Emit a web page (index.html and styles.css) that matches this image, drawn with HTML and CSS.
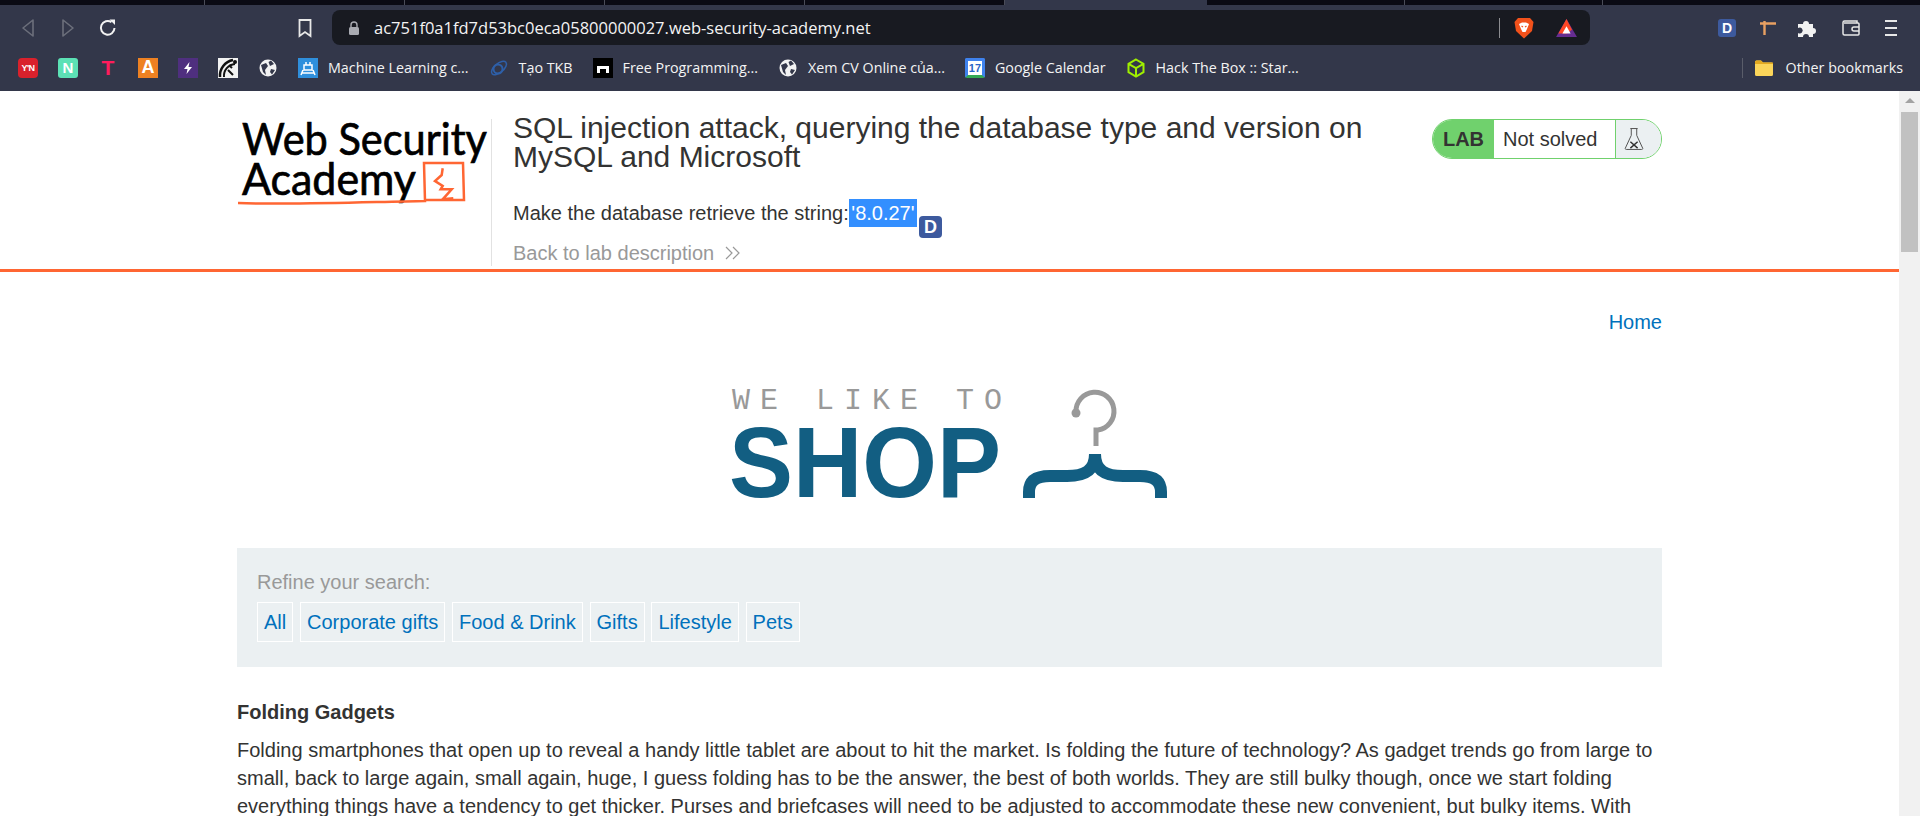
FILE: index.html
```html
<!DOCTYPE html>
<html>
<head>
  <meta charset="UTF-8">
  <title>SQL injection attack, querying the database type and version on MySQL and Microsoft</title>
  <link rel="stylesheet" href="styles.css">
</head>
<body>

  <div class="tabstrip">
    <div class="tab first"></div>
    <div class="tab"></div>
    <div class="tab"></div>
    <div class="tab"></div>
    <div class="tab"></div>
    <div class="tab active"></div>
    <div class="tab short"></div>
    <div class="tab short"></div>
    <div class="tab last"></div>
  </div>

  <div class="toolbar">
    <svg class="ico" viewBox="0 0 20 20"><path d="M15 2 L5 10 L15 18Z" fill="none" stroke="#6c6f7b" stroke-width="1.6" stroke-linejoin="round"/></svg>
    <svg class="ico" viewBox="0 0 20 20"><path d="M5 2 L15 10 L5 18Z" fill="none" stroke="#6c6f7b" stroke-width="1.6" stroke-linejoin="round"/></svg>
    <svg class="ico" viewBox="0 0 20 20"><path d="M16.5 10 A6.8 6.8 0 1 1 13.5 4.2" fill="none" stroke="#f2f2f2" stroke-width="2"/><path d="M11.5 1.5 H17 V7 Z" fill="#f2f2f2"/></svg>
    <svg class="ico bookmark-btn" viewBox="0 0 20 20"><path d="M4.500 2 H15.500 V18 L10 14 L4.500 18Z" fill="none" stroke="#e8e8e8" stroke-width="1.800"/></svg>
    <div class="omnibox">
      <svg class="lock" viewBox="0 0 12 14"><path d="M3 6 V4 A3 3 0 0 1 9 4 V6" fill="none" stroke="#a9abb2" stroke-width="1.400"/><rect x="1" y="6" width="10" height="8" rx="1.500" fill="#a9abb2"/></svg>
      <span class="url">ac751f0a1fd7d53bc0eca05800000027.web-security-academy.net</span>
      <div class="omni-right">
        <div class="omni-sep"></div>
        <svg class="brave" viewBox="0 0 20 22"><path d="M4 1 H16 L19.500 5 L18 14 L10 21.500 L2 14 L0.500 5Z" fill="#f1511b"/><path d="M5 7 L8 5.500 H12 L15 7 L13 12 L11.500 15 H8.500 L7 12Z" fill="#fff"/><path d="M7.500 9 L9 10 M12.500 9 L11 10" stroke="#f1511b" stroke-width="1.200"/></svg>
        <svg class="bat" viewBox="0 0 24 22"><path d="M12 1 L23.500 21 H0.500Z" fill="#662d91"/><path d="M12 1 L18 13 L12 17 H3Z" fill="#ff4724"/><path d="M12 9 L16.500 17 H7.500Z" fill="#fff"/></svg>
      </div>
    </div>
    <div class="ext-d">D</div>
    <svg class="ico" viewBox="0 0 20 20"><path d="M3 5.500 H19 M7.500 3 V17" fill="none" stroke="#e8a062" stroke-width="2.400"/></svg>
    <svg class="ico" viewBox="0 0 20 20"><path d="M1 6 H6 A3 3 0 1 1 12 6 H16 V10 A3 3 0 1 1 16 16 V19 H12 A3 3 0 1 0 6 19 H1 V15 A3 3 0 1 0 1 10Z" fill="#f2f2f2"/></svg>
    <svg class="ico wallet" viewBox="0 0 20 20"><path d="M16 5 V3 H3.500 A1.500 1.500 0 0 0 2 4.500 V15.500 A1.500 1.500 0 0 0 3.500 17 H17 A1 1 0 0 0 18 16 V6 A1 1 0 0 0 17 5 H3 M18 9 H13 A2 2 0 0 0 13 13 H18" fill="none" stroke="#e8e8e8" stroke-width="1.500"/></svg>
    <svg class="ico" viewBox="0 0 20 20"><path d="M4 3 H16 M4 10 H16 M4 17 H16" stroke="#e8e8e8" stroke-width="1.800"/></svg>
  </div>

  <div class="bookmarks">
    <div class="bm-icon fav-yan">Y'N</div>
    <div class="bm-icon fav-n">N</div>
    <div class="bm-icon fav-t">T</div>
    <div class="bm-icon fav-a">A</div>
    <div class="bm-icon fav-bolt"><svg viewBox="0 0 20 20"><path d="M11.500 4 L6 11 H9.500 L8.500 16 L14 9 H10.500Z" fill="#fff"/></svg></div>
    <div class="bm-icon fav-clock"><svg viewBox="0 0 20 20"><path d="M2 19 A16 16 0 0 1 15 2" fill="none" stroke="#111" stroke-width="2.500"/><path d="M6 19 A12 12 0 0 1 17 6 M10 12 L15 17 M11 7 L14 10" fill="none" stroke="#111" stroke-width="2"/><circle cx="17" cy="4" r="2" fill="#111"/></svg></div>
    <svg class="bm-svg" viewBox="0 0 20 20"><circle cx="10" cy="10" r="8.500" fill="#f2f2f2"/><path d="M3 7 L8 5 L10 8 L7 12 L8 17 L5 14Z M13 2.500 L16 6 L12 8 L10.500 4Z M13 11 L17 12 L14 16.500 L12 14Z" fill="#33374a"/></svg>

    <div class="bm">
      <div class="bm-icon fav-ml"><svg viewBox="0 0 20 20"><path d="M6 7 H14 V12 H6Z M4 15 H16 M5 12 L3 17 M15 12 L17 17 M8 4 V7 M12 4 V7" fill="none" stroke="#fff" stroke-width="1.500"/></svg></div>
      <span>Machine Learning c...</span>
    </div>
    <div class="bm">
      <svg class="bm-svg" viewBox="0 0 20 20"><ellipse cx="10" cy="10" rx="9" ry="4.500" transform="rotate(-40 10 10)" fill="none" stroke="#2e5fa8" stroke-width="1.500"/><circle cx="9" cy="11" r="4.500" fill="none" stroke="#2e5fa8" stroke-width="2"/></svg>
      <span>Tạo TKB</span>
    </div>
    <div class="bm">
      <div class="bm-icon fav-fp"><svg viewBox="0 0 20 20"><path d="M4 15 V8 H16 V15 H13 V11 H7 V15Z" fill="#fff"/></svg></div>
      <span>Free Programming...</span>
    </div>
    <div class="bm">
      <svg class="bm-svg" viewBox="0 0 20 20"><circle cx="10" cy="10" r="8.500" fill="#f2f2f2"/><path d="M3 7 L8 5 L10 8 L7 12 L8 17 L5 14Z M13 2.500 L16 6 L12 8 L10.500 4Z M13 11 L17 12 L14 16.500 L12 14Z" fill="#33374a"/></svg>
      <span>Xem CV Online của...</span>
    </div>
    <div class="bm">
      <div class="bm-icon fav-cal">17</div>
      <span>Google Calendar</span>
    </div>
    <div class="bm">
      <svg class="bm-svg" viewBox="0 0 20 20"><path d="M10 1.500 L17.500 5.800 V14.200 L10 18.500 L2.500 14.200 V5.800Z M2.500 5.800 L10 10 L17.500 5.800 M10 10 V18.500" fill="none" stroke="#9fef00" stroke-width="2"/></svg>
      <span>Hack The Box :: Star...</span>
    </div>

    <div class="bm-other">
      <svg class="folder" viewBox="0 0 20 18"><path d="M1 3 A1.500 1.500 0 0 1 2.500 1.500 H7 L9 3.500 H17.500 A1.500 1.500 0 0 1 19 5 V15.500 A1.500 1.500 0 0 1 17.500 17 H2.500 A1.500 1.500 0 0 1 1 15.500Z" fill="#fbd55a"/><path d="M1 3 A1.500 1.500 0 0 1 2.500 1.500 H7 L9 3.500 H19 V5 H1Z" fill="#e3a91f"/></svg>
      <span>Other bookmarks</span>
    </div>
  </div>

  <div class="viewport">
    <div class="page">

      <div class="lab-banner">
        <div class="lab-inner">
          <div class="logo-col">
            <svg class="academy-logo" viewBox="0 -12 252 124">
              <text class="logo-text" x="5" y="36" textLength="245" lengthAdjust="spacingAndGlyphs">Web Security</text>
              <text class="logo-text" x="5" y="76" textLength="174" lengthAdjust="spacingAndGlyphs">Academy</text>
              <path d="M1 84 C60 86 130 83 188 82 L187 44 H226 L227 81 L188 81" fill="none" stroke="#ff6633" stroke-width="2.500"/>
              <path d="M205.700 49.300 L204.700 56 L198 62 L205.700 67 L203.700 70.300 H214.700 L205.700 80.300 L216.300 79.300" fill="none" stroke="#ff6633" stroke-width="2.500"/>
            </svg>
          </div>
          <div class="lab-main">
            <h2 class="lab-title">SQL injection attack, querying the database type and version on MySQL and Microsoft</h2>
            <p class="lab-task">Make the database retrieve the string: <span class="selected">'8.0.27'</span><span class="ext-popup">D</span></p>
            <a class="back-link" href="#">Back to lab description
              <svg class="chevrons" viewBox="0 0 16 14"><path d="M1 1 L7 7 L1 13 M8 1 L14 7 L8 13" fill="none" stroke="#999" stroke-width="1.200"/></svg>
            </a>
          </div>
          <div class="lab-status">
            <div class="status-lab">LAB</div>
            <div class="status-text">Not solved</div>
            <div class="status-flask">
              <svg viewBox="0 0 22 26"><path d="M7 1.500 H15 M8 1.500 V9 L1.500 23 A1 1 0 0 0 2.500 24.500 H19.500 A1 1 0 0 0 20.500 23 L14 9 V1.500" fill="none" stroke="#555" stroke-width="1.100"/><path d="M7 16 L15 23 M15 16 L7 23" stroke="#333" stroke-width="1.600"/></svg>
            </div>
          </div>
        </div>
      </div>

      <div class="content">
        <div class="top-links"><a href="#">Home</a></div>

        <div class="shop-logo">
          <svg viewBox="-10 0 460 124" class="shop-svg">
            <text class="shop-small" x="0" y="28.500" textLength="270">WE LIKE TO</text>
            <text class="shop-big" x="-3" y="117" textLength="272" lengthAdjust="spacingAndGlyphs">SHOP</text>
            <path d="M344 32 A19 19 0 1 1 366 50 H364 V66" fill="none" stroke="#999" stroke-width="5"/>
            <circle cx="344" cy="33" r="4.500" fill="#999"/>
            <path d="M297 118 V112 C297 101 304 96 318 96 H335 C352 96 363 91 363 74 M429 118 V112 C429 101 422 96 408 96 H391 C374 96 363 91 363 74" fill="none" stroke="#125e82" stroke-width="12"/>
          </svg>
        </div>

        <section class="search-panel">
          <div class="refine">Refine your search:</div>
          <div class="filters">
            <a class="filter" href="#">All</a>
            <a class="filter" href="#">Corporate gifts</a>
            <a class="filter" href="#">Food &amp; Drink</a>
            <a class="filter" href="#">Gifts</a>
            <a class="filter" href="#">Lifestyle</a>
            <a class="filter" href="#">Pets</a>
          </div>
        </section>

        <h3 class="post-title">Folding Gadgets</h3>
        <p class="post-body">Folding smartphones that open up to reveal a handy little tablet are about to hit the market. Is folding the future of technology? As gadget trends go from large to small, back to large again, small again, huge, I guess folding has to be the answer, the best of both worlds. They are still bulky though, once we start folding everything things have a tendency to get thicker. Purses and briefcases will need to be adjusted to accommodate these new convenient, but bulky items. With</p>
      </div>
    </div>

    <div class="scrollbar">
      <div class="scroll-up"></div>
      <div class="scroll-thumb"></div>
    </div>
  </div>

</body>
</html>
```

FILE: styles.css
```css
html, body {
  margin: 0;
  height: 816px;
  overflow: hidden;
}
body {
  font-family: "Liberation Sans", Arial, sans-serif;
  font-size: 20px;
  color: #333332;
  background: #fff;
}
a {
  color: #0071bc;
  text-decoration: none;
}

/* browser chrome */
.tabstrip {
  display: flex;
  height: 5px;
  background: #33374a;
}
.tab {
  width: 199px;
  flex: none;
  background: #0a0a14;
  border-right: 1px solid #4a4c58;
}
.tab.first {
  width: 204px;
}
.tab.active {
  background: #33374a;
  border-right: none;
  width: 202px;
}
.tab.short {
  width: 197px;
}
.tab.last {
  flex: 1;
  border-right: none;
}
.toolbar {
  display: flex;
  align-items: center;
  height: 45px;
  padding: 0 18px;
  gap: 20px;
  background: #33374a;
}
.ico {
  width: 20px;
  height: 20px;
  flex: none;
}
.bookmark-btn {
  margin-left: 157px;
}
.omnibox {
  display: flex;
  align-items: center;
  width: 1258px;
  height: 35px;
  margin: 0 109px 0 -3px;
  padding: 0 12px 0 16px;
  box-sizing: border-box;
  background: #181a21;
  border-radius: 8px;
  flex: none;
}
.lock {
  width: 12px;
  height: 14px;
  margin-right: 14px;
}
.url {
  font-family: "Open Sans", sans-serif;
  font-size: 16.5px;
  color: #f4f4f4;
  white-space: nowrap;
}
.omni-right {
  display: flex;
  align-items: center;
  margin-left: auto;
}
.omni-sep {
  width: 1px;
  height: 20px;
  background: #8b8c90;
  margin-right: 14px;
}
.brave {
  width: 20px;
  height: 22px;
  margin-right: 21px;
}
.bat {
  width: 23px;
  height: 20px;
}
.ext-d, .ext-popup {
  display: flex;
  align-items: center;
  justify-content: center;
  font-family: "Liberation Sans", sans-serif;
  font-weight: bold;
  color: #fff;
  background: #3d5a9e;
}
.ext-d {
  width: 18px;
  height: 18px;
  margin-left: -1px;
  margin-right: 1px;
  font-size: 14px;
  border-radius: 3px;
}
.wallet {
  margin-left: 4px;
}

.bookmarks {
  display: flex;
  align-items: center;
  height: 41px;
  padding: 0 18px 6px;
  box-sizing: border-box;
  gap: 20px;
  background: #33374a;
  font-family: "Open Sans", sans-serif;
  font-size: 14.3px;
  color: #f4f4f4;
}
.bm {
  display: flex;
  align-items: center;
  gap: 10px;
  white-space: nowrap;
}
.bm-svg, .bm-icon {
  width: 20px;
  height: 20px;
  flex: none;
}
.bm-icon {
  display: flex;
  align-items: center;
  justify-content: center;
  font-family: "Liberation Sans", sans-serif;
  font-weight: bold;
  color: #fff;
}
.bm-icon svg {
  width: 20px;
  height: 20px;
}
.fav-yan {
  font-size: 9px;
  background: #d9212c;
  border-radius: 4px;
  letter-spacing: -0.5px;
}
.fav-n {
  font-size: 15px;
  background: #5ce1b5;
  border-radius: 3px;
}
.fav-t {
  font-size: 21px;
  color: #ff1c5c;
}
.fav-a {
  font-size: 18px;
  background: #ee8122;
}
.fav-bolt {
  background: #4f2f7f;
}
.fav-clock {
  background: #f2f2f2;
}
.fav-ml {
  background: #2f8fdc;
}
.fav-fp {
  background: #000;
}
.fav-cal {
  font-size: 11px;
  color: #2a64c6;
  background: #fff;
  border: 3px solid #3f82ee;
  border-bottom-color: #34a853;
  box-sizing: border-box;
  border-radius: 2px;
}
.bm-other {
  display: flex;
  align-items: center;
  gap: 12px;
  margin-left: auto;
  margin-right: -1px;
  padding-left: 11px;
  border-left: 1px solid #5a5d6a;
  height: 20px;
  white-space: nowrap;
}
.folder {
  width: 20px;
  height: 18px;
}

/* page */
.viewport {
  display: flex;
  height: 725px;
  overflow: hidden;
}
.page {
  flex: 1;
  min-width: 0;
}
.scrollbar {
  width: 21px;
  background: #f1f1f1;
  flex: none;
}
.scroll-up {
  height: 21px;
  position: relative;
}
.scroll-up::after {
  content: "";
  position: absolute;
  left: 6px;
  top: 7px;
  border-left: 5px solid transparent;
  border-right: 5px solid transparent;
  border-bottom: 5px solid #a3a3a3;
}
.scroll-thumb {
  width: 17px;
  height: 140px;
  margin-left: 2px;
  background: #c1c1c1;
}

.lab-banner {
  height: 181px;
  box-sizing: border-box;
  border-bottom: 3px solid #ff6633;
}
.lab-inner {
  display: flex;
  align-items: flex-start;
  width: 1425px;
  margin-left: 237px;
  padding-top: 28px;
}
.logo-col {
  width: 255px;
  height: 147px;
  box-sizing: border-box;
  border-right: 1px solid #e2e2e2;
  flex: none;
}
.academy-logo {
  display: block;
  width: 252px;
  height: 124px;
  margin-top: -12px;
}
.logo-text {
  font-family: Lato, sans-serif;
  font-size: 45px;
  fill: #000;
  stroke: #000;
  stroke-width: 0.7px;
}
.lab-main {
  flex: 1;
  padding-left: 21px;
  min-width: 0;
}
.lab-title {
  margin: -6px 0 0;
  width: 900px;
  font-size: 30px;
  line-height: 29px;
  font-weight: normal;
}
.lab-task {
  margin: 28px 0 0;
  line-height: 28px;
  position: relative;
}
.selected {
  display: inline-block;
  color: #fff;
  background: #338fff;
  margin-left: -5px;
  padding: 0 2px;
}
.ext-popup {
  position: absolute;
  left: 406px;
  top: 17px;
  width: 23px;
  height: 22px;
  border-radius: 4px;
  font-size: 18px;
}
.back-link {
  display: flex;
  align-items: center;
  gap: 11px;
  margin-top: 12px;
  color: #999;
  line-height: 28px;
}
.chevrons {
  width: 16px;
  height: 14px;
}
.lab-status {
  display: flex;
  width: 230px;
  height: 40px;
  box-sizing: border-box;
  border: 1px solid #70d16d;
  border-radius: 20px;
  overflow: hidden;
  flex: none;
}
.status-lab {
  width: 61px;
  line-height: 38px;
  text-align: center;
  font-weight: bold;
  background: #70d16d;
}
.status-text {
  width: 122px;
  padding-left: 9px;
  box-sizing: border-box;
  line-height: 38px;
  border-right: 1px solid #70d16d;
}
.status-flask {
  flex: 1;
  display: flex;
  align-items: center;
  padding-left: 8px;
  background: #ebf0f2;
}
.status-flask svg {
  width: 20px;
  height: 26px;
}

.content {
  width: 1425px;
  margin-left: 237px;
}
.top-links {
  margin-top: 36px;
  line-height: 28px;
  text-align: right;
}
.shop-logo {
  margin-top: 44px;
}
.shop-svg {
  display: block;
  width: 460px;
  height: 124px;
  margin-left: 485px;
}
.shop-small {
  font-family: "Liberation Mono", monospace;
  font-size: 30px;
  fill: #999;
}
.shop-big {
  font-family: "Liberation Sans", sans-serif;
  font-weight: bold;
  font-size: 100px;
  fill: #125e82;
}
.search-panel {
  margin-top: 44px;
  padding: 20px;
  height: 119px;
  box-sizing: border-box;
  background: #ebf0f2;
}
.refine {
  color: #999;
  line-height: 28px;
}
.filters {
  display: flex;
  gap: 6.8px;
  margin-top: 6px;
}
.filter {
  padding: 0 6px;
  line-height: 38px;
  border: 1px solid #fff;
}
.post-title {
  margin: 31px 0 0;
  font-size: 20px;
  line-height: 28px;
}
.post-body {
  margin: 10px 0 0;
  line-height: 28px;
}
```
